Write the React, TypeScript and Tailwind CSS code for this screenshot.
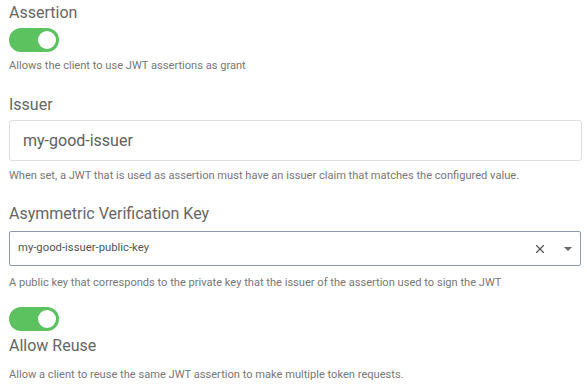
import { X } from 'lucide-react'

function Toggle() {
  return (
    <div className="w-[50px] h-[24px] rounded-full bg-[#5cc25f] flex items-center justify-end px-[3px]">
      <div className="w-[18px] h-[18px] rounded-full bg-white" />
    </div>
  )
}

export default function App() {
  return (
    <div className="w-[587px] h-[392px] bg-white px-[9px] pt-[3px] font-['Roboto',sans-serif] text-[#666] overflow-hidden">
      {/* Assertion */}
      <div className="text-[16px] leading-[20px]">Assertion</div>
      <div className="mt-[5px]">
        <Toggle />
      </div>
      <p className="mt-[6px] text-[11.1px] leading-[16px] text-[#777]">Allows the client to use JWT assertions as grant</p>

      {/* Issuer */}
      <div className="mt-[21px] text-[16px] leading-[20px]">Issuer</div>
      <div className="mt-[5px] w-[573px] h-[41px] border border-[#dedede] rounded-[3px] flex items-center px-[13px] text-[16px] text-[#606060]">
        my-good-issuer
      </div>
      <p className="mt-[7px] text-[11.1px] leading-[16px] text-[#777]">When set, a JWT that is used as assertion must have an issuer claim that matches the configured value.</p>

      {/* Asymmetric key */}
      <div className="mt-[20px] text-[16px] leading-[20px]">Asymmetric Verification Key</div>
      <div className="mt-[7px] w-[572px] h-[35px] border border-[#8c9bb3] rounded-[2px] flex items-center pl-[8px] pr-[7px] text-[11.3px] text-[#555]">
        <span className="flex-1">my-good-issuer-public-key</span>
        <div className="flex items-center gap-[16px]">
          <X size={14} strokeWidth={2} className="text-[#555] shrink-0" />
          <div className="w-[10px] h-[10px] flex items-center justify-center">
            <div className="w-0 h-0 border-l-[4.5px] border-r-[4.5px] border-t-[4.5px] border-l-transparent border-r-transparent border-t-[#666]" />
          </div>
        </div>
      </div>
      <p className="mt-[9px] text-[11.1px] leading-[16px] text-[#777]">A public key that corresponds to the private key that the issuer of the assertion used to sign the JWT</p>

      {/* Allow reuse */}
      <div className="mt-[16px]">
        <Toggle />
      </div>
      <div className="mt-[5px] text-[16px] leading-[20px]">Allow Reuse</div>
      <p className="mt-[11px] text-[11.1px] leading-[16px] text-[#777]">Allow a client to reuse the same JWT assertion to make multiple token requests.</p>
    </div>
  )
}
